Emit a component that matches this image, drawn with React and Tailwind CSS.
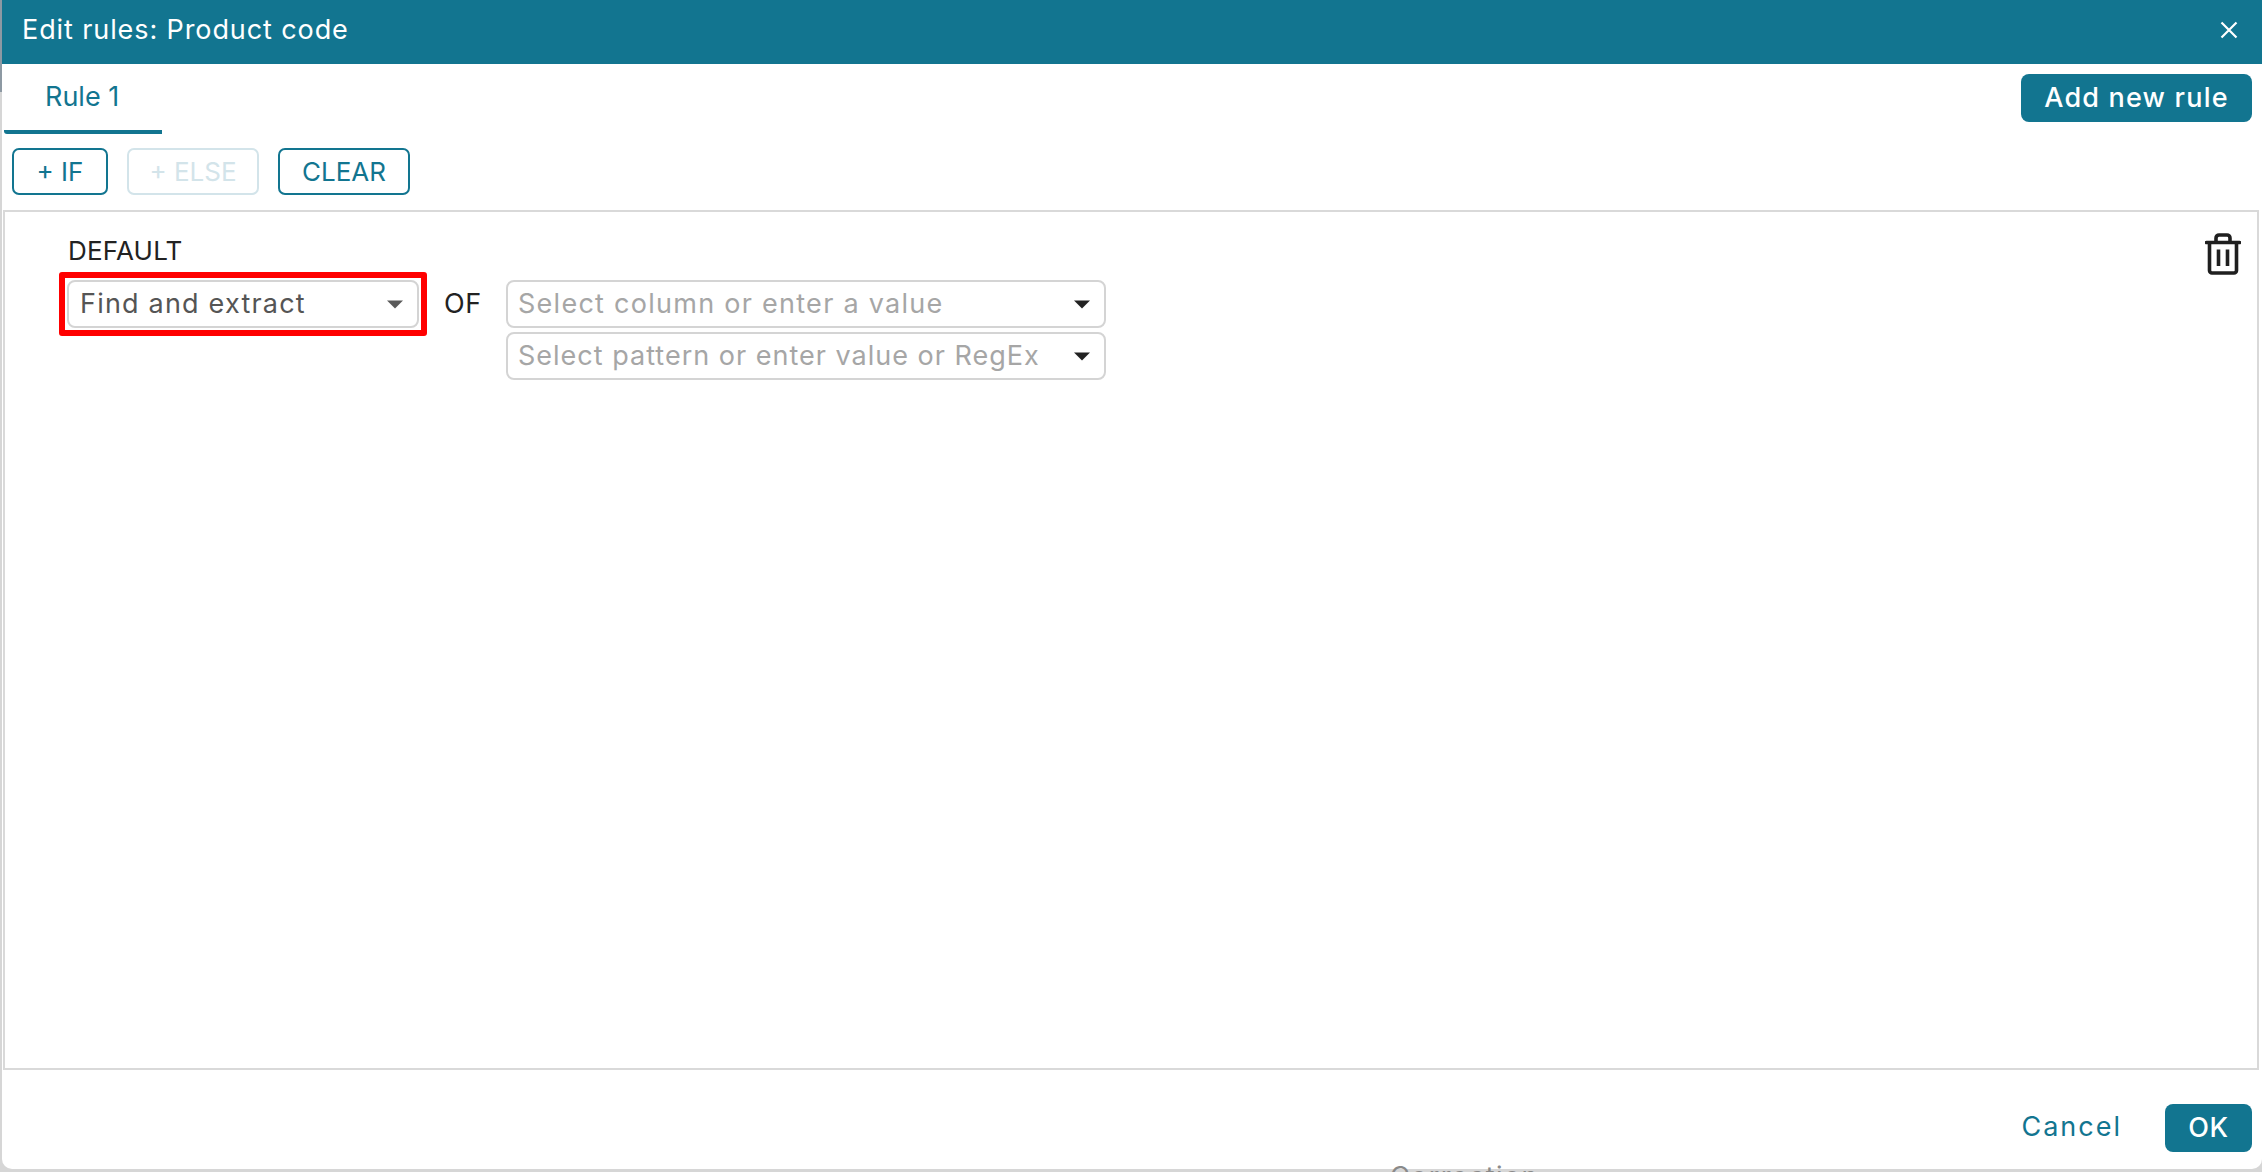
import React from 'react';

const font = { fontFamily: 'Inter, "Noto Sans", sans-serif' };

const Caret = ({ color = '#222222' }) => (
    <svg width="16" height="9" viewBox="0 0 16 9" className="shrink-0"><path d="M0 0.5h16L8 8.5z" fill={color} /></svg>
);

const Select = ({ children, className = '', text = 'text-[#a6a6a6]', caret }) => (
    <div className={`flex items-center justify-between border-2 border-[#d4d4d4] rounded-[8px] h-[48px] pl-[10px] pr-[14px] text-[27px] ${text} ${className}`}>
        <span className="whitespace-nowrap">{children}</span>
        <Caret color={caret} />
    </div>
);

const Outline = ({ children, className = '' }) => (
    <button className={`h-[47px] border-2 rounded-[7px] text-[26px] flex items-center justify-center ${className}`}>{children}</button>
);

export default function App() {
    return (
        <div className="h-[1172px] w-full bg-[#d6d6d6] pl-[2px] pb-[3px] flex relative overflow-hidden" style={font}>
            <div className="flex-1 flex flex-col bg-white rounded-b-[10px]">
                <div className="h-[64px] bg-[#127590] text-white flex items-center justify-between pl-[20px] pr-[24px] pb-[4px] shrink-0">
                    <span className="text-[27px] tracking-[0.9px]">Edit rules: Product code</span>
                    <svg width="18" height="18" viewBox="0 0 18 18" stroke="white" strokeWidth="2.2" fill="none"><path d="M1.5 1.5l15 15M16.500 1.500l-15 15" /></svg>
                </div>

                <div className="h-[70px] flex justify-between shrink-0 pr-[10px]">
                    <div className="w-[158px] ml-[2px] h-full border-b-4 border-[#127590] rounded-bl-[3px] flex items-center pl-[41px] pt-[1px] text-[#127590] text-[27px]">Rule 1</div>
                    <button className="mt-[10px] h-[48px] w-[231px] bg-[#127590] text-white rounded-[8px] text-[27px] font-medium tracking-[1.2px]">Add new rule</button>
                </div>

                <div className="flex gap-[19px] pl-[10px] mt-[14px] shrink-0">
                    <Outline className="w-[96px] border-[#127590] text-[#127590]">+ IF</Outline>
                    <Outline className="w-[132px] border-[#d3e4ea] text-[#d3e4ea]">+ ELSE</Outline>
                    <Outline className="w-[132px] border-[#127590] text-[#127590]">CLEAR</Outline>
                </div>

                <div className="h-[860px] mt-[15px] ml-[1px] mr-[3px] border-2 border-[#d9d9d9] pl-[63px] pr-[16px] pt-[24px] flex justify-between shrink-0">
                    <div>
                        <div className="text-[26px] tracking-[0.2px] leading-[30px] text-[#222222]">DEFAULT</div>
                        <div className="flex mt-[6px] -ml-[9px]">
                            <div className="border-[6px] border-[#ff0000] rounded-[3px] p-[2px] w-[368px] h-[64px]">
                                <Select className="w-full h-[46px] tracking-[1.2px] pl-[11px]" text="text-[#555555]" caret="#5a5a5a">Find and extract</Select>
                            </div>
                            <div className="w-[79px] pl-[17px] pt-[12px] text-[27px] tracking-[0.5px] text-[#222222]">OF</div>
                            <div className="flex flex-col gap-[4px] mt-[8px]">
                                <Select className="w-[600px] tracking-[1.27px]">Select column or enter a value</Select>
                                <Select className="w-[600px] tracking-[1px]">Select pattern or enter value or RegEx</Select>
                            </div>
                        </div>
                    </div>
                    <svg width="36" height="42" viewBox="0 0 36 42" fill="none" stroke="#1f1f1f" strokeWidth="3.600" className="-mt-[3px]">
                        <path d="M1.500 9.500h33" strokeLinecap="round" />
                        <path d="M11 9V5a3 3 0 0 1 3-3h8a3 3 0 0 1 3 3v4" />
                        <path d="M4.500 10v27.500a2.500 2.500 0 0 0 2.500 2.500h22a2.500 2.500 0 0 0 2.500-2.500V10" />
                        <path d="M13.500 16.500v16.500M22.500 16.500v16.500" />
                    </svg>
                </div>

                <div className="flex-1 flex items-start justify-end gap-[43px] pr-[10px] pt-[34px]">
                    <button className="text-[#127590] text-[27px] tracking-[2px] h-[47px]">Cancel</button>
                    <button className="w-[87px] h-[48px] bg-[#127590] text-white rounded-[8px] text-[27px] font-medium tracking-[0.5px]">OK</button>
                </div>
            </div>
            <div className="absolute left-[1390px] top-[1162px] text-[27px] leading-[30px] text-[#8a8a8a] tracking-[1.4px]">Correction</div>
            <div className="absolute left-0 top-0 w-[2px] h-[92px] bg-[#8d99a3]" />
        </div>
    );
}
